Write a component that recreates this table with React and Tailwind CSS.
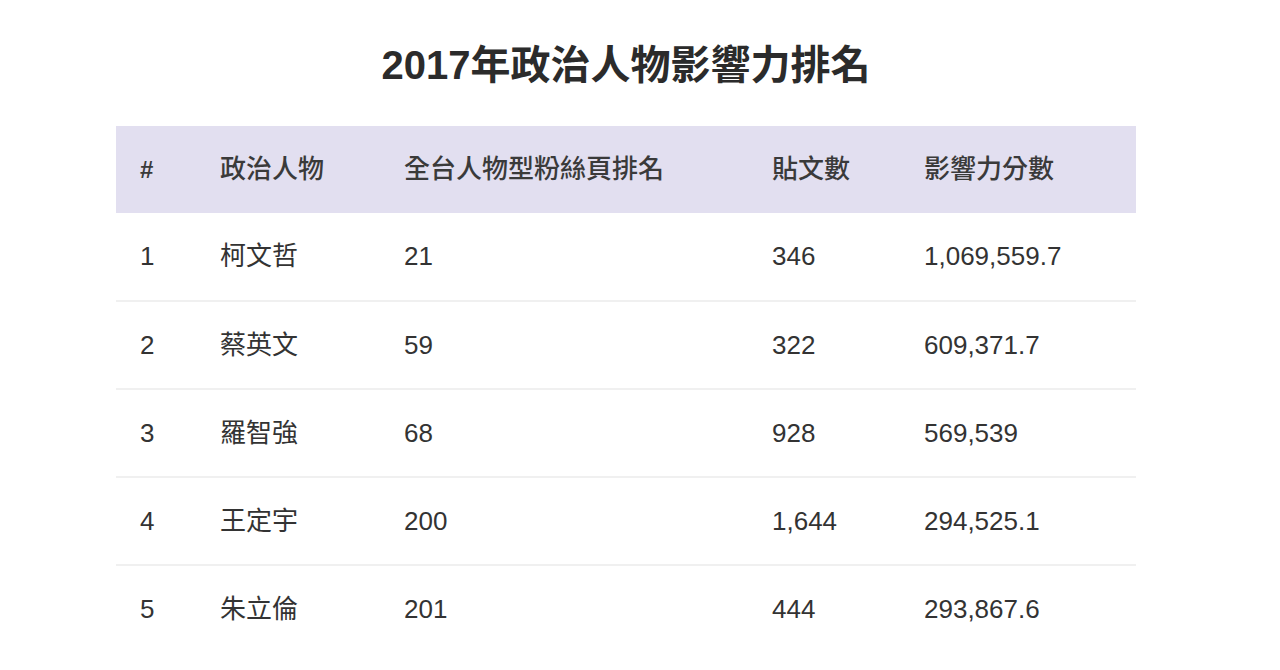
const rows = [
    { id: 1, name: "柯文哲", rank: "21", posts: "346", score: "1,069,559.7" },
    { id: 2, name: "蔡英文", rank: "59", posts: "322", score: "609,371.7" },
    { id: 3, name: "羅智強", rank: "68", posts: "928", score: "569,539" },
    { id: 4, name: "王定宇", rank: "200", posts: "1,644", score: "294,525.1" },
    { id: 5, name: "朱立倫", rank: "201", posts: "444", score: "293,867.6" },
];

const headers = ["#", "政治人物", "全台人物型粉絲頁排名", "貼文數", "影響力分數"];

export default function App() {
    return (
        <div
            className="min-h-screen bg-white text-[#333333]"
            style={{ fontFamily: '"Liberation Sans", "Noto Sans CJK TC", sans-serif' }}
        >
            <div className="ml-[116px] w-[1020px]">
                <h1 className="pt-[40px] h-[126px] text-center text-[40px] leading-[50px] font-semibold text-[#2b2b2b]">
                    2017年政治人物影響力排名
                </h1>

                <table className="w-full table-fixed border-collapse text-[26px]">
                    <colgroup>
                        <col className="w-[80px]" />
                        <col className="w-[184px]" />
                        <col className="w-[368px]" />
                        <col className="w-[152px]" />
                        <col className="w-[236px]" />
                    </colgroup>
                    <thead>
                        <tr className="h-[87px] bg-[#e2dff0]">
                            {headers.map((h) => (
                                <th
                                    key={h}
                                    className={h === "#" ? "pl-6 text-left text-[24px] font-bold text-[#3a3a3a]" : "pl-6 text-left font-medium text-[#3a3a3a]"}
                                >
                                    {h}
                                </th>
                            ))}
                        </tr>
                    </thead>
                    <tbody>
                        {rows.map((r, i) => (
                            <tr
                                key={r.id}
                                className={i < rows.length - 1 ? "h-[88px] border-b-2 border-[#f0f0f0]" : "h-[88px]"}
                            >
                                <td className="pl-6">{r.id}</td>
                                <td className="pl-6">{r.name}</td>
                                <td className="pl-6">{r.rank}</td>
                                <td className="pl-6">{r.posts}</td>
                                <td className="pl-6">{r.score}</td>
                            </tr>
                        ))}
                    </tbody>
                </table>
            </div>
        </div>
    );
}
